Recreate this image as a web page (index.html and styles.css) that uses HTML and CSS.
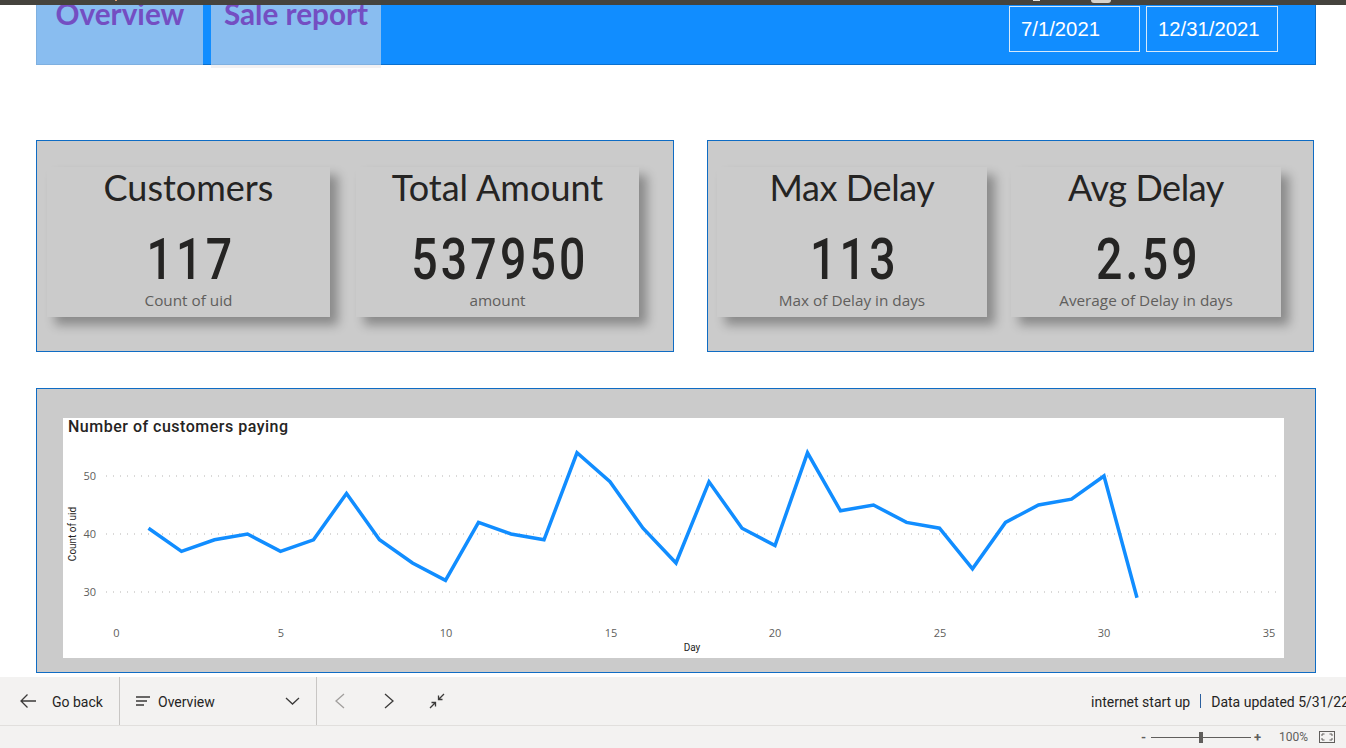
FILE: index.html
```html
<!DOCTYPE html>
<html lang="en">
<head>
    <meta charset="UTF-8">
    <meta name="viewport" content="width=device-width, initial-scale=1.0">
    <title>Overview</title>
    <link rel="stylesheet" href="styles.css">
</head>
<body>
    <div class="browser-edge">
        <span class="edge-mark mark-dot"></span>
        <span class="edge-mark mark-white"></span>
        <span class="edge-mark mark-chip"></span>
    </div>

    <main class="report">
        <header class="banner">
            <nav class="tabs">
                <a class="tab tab-overview">Overview</a>
                <a class="tab tab-sale">Sale report</a>
            </nav>
            <div class="dates">
                <div class="date date-from">7/1/2021</div>
                <div class="date date-to">12/31/2021</div>
            </div>
        </header>

        <section class="kpi-row">
            <div class="panel panel-left">
                <div class="card card-customers">
                    <div class="card-title">Customers</div>
                    <div class="card-value">117</div>
                    <div class="card-label">Count of uid</div>
                </div>
                <div class="card card-amount">
                    <div class="card-title">Total Amount</div>
                    <div class="card-value">537950</div>
                    <div class="card-label">amount</div>
                </div>
            </div>
            <div class="panel panel-right">
                <div class="card card-delay">
                    <div class="card-title">Max Delay</div>
                    <div class="card-value">113</div>
                    <div class="card-label">Max of Delay in days</div>
                </div>
                <div class="card card-delay">
                    <div class="card-title">Avg Delay</div>
                    <div class="card-value">2.59</div>
                    <div class="card-label">Average of Delay in days</div>
                </div>
            </div>
        </section>

        <section class="chart-panel">
            <div class="chart">
                <!-- viewBox keeps the page coordinates of the visual -->
                <svg class="chart-svg" viewBox="63 418 1221 240" width="1221" height="240">
                    <text class="chart-title" x="68" y="432">Number of customers paying</text>

                    <line class="grid" x1="106" y1="476" x2="1280" y2="476"/>
                    <line class="grid" x1="106" y1="534" x2="1280" y2="534"/>
                    <line class="grid" x1="106" y1="592" x2="1280" y2="592"/>

                    <text class="tick" x="96" y="480" text-anchor="end">50</text>
                    <text class="tick" x="96" y="538" text-anchor="end">40</text>
                    <text class="tick" x="96" y="596" text-anchor="end">30</text>

                    <text class="tick" x="116.500" y="637" text-anchor="middle">0</text>
                    <text class="tick" x="281" y="637" text-anchor="middle">5</text>
                    <text class="tick" x="446" y="637" text-anchor="middle">10</text>
                    <text class="tick" x="611" y="637" text-anchor="middle">15</text>
                    <text class="tick" x="775" y="637" text-anchor="middle">20</text>
                    <text class="tick" x="940" y="637" text-anchor="middle">25</text>
                    <text class="tick" x="1104" y="637" text-anchor="middle">30</text>
                    <text class="tick" x="1269" y="637" text-anchor="middle">35</text>

                    <text class="axis-name" x="692" y="651" text-anchor="middle">Day</text>
                    <text class="axis-name" transform="translate(76 534) rotate(-90)" text-anchor="middle">Count of uid</text>

                    <polyline class="line" points="148.500,528.200 181.500,551.400 214.500,539.800 247.500,534 280.500,551.400 313.500,539.800 346.500,493.400 379.500,539.800 412.500,563 445.500,580.400 478.500,522.400 511,534 544,539.800 577,452.800 610,481.800 643,528.200 676,563 709,481.800 742,528.200 775,545.600 807.500,452.800 840.500,510.800 873.500,505 906.500,522.400 939.500,528.200 972.500,568.800 1005.500,522.400 1038.500,505 1071.500,499.200 1104,476 1137,597.800"/>
                </svg>
            </div>
        </section>
    </main>

    <footer class="viewer">
        <div class="pagebar">
            <a class="bar-item go-back">
                <svg class="icon" width="16" height="14" viewBox="0 0 16 14"><path d="M16 7H1M7.500 0.500L1 7l6.500 6.500"/></svg>
                <span>Go back</span>
            </a>
            <a class="bar-item page-select">
                <svg class="icon" width="15" height="10" viewBox="0 0 15 10"><path d="M0 1h14M0 5h11M0 9h8"/></svg>
                <span class="page-name">Overview</span>
                <svg class="icon" width="15" height="8" viewBox="0 0 15 8"><path d="M1 1l6.500 6L14 1"/></svg>
            </a>
            <div class="bar-nav">
                <svg class="icon icon-off" width="10" height="16" viewBox="0 0 10 16"><path d="M9 1L1 8l8 7"/></svg>
                <svg class="icon" width="10" height="16" viewBox="0 0 10 16"><path d="M1 1l8 7-8 7"/></svg>
                <svg class="icon icon-shrink" width="16" height="16" viewBox="0 0 16 16"><path d="M15 1L9.500 6.500M9.500 2.500v4h4M1 15l5.500-5.500M2.500 9.500h4v4"/></svg>
            </div>
            <div class="bar-status">
                <span>internet start up</span>
                <span class="status-sep"></span>
                <span>Data updated 5/31/22</span>
            </div>
        </div>
        <div class="zoombar">
            <span class="zoom-sign">-</span>
            <div class="zoom-track"><span class="zoom-thumb"></span></div>
            <span class="zoom-sign">+</span>
            <span class="zoom-pct">100%</span>
            <svg class="fit-icon" width="16" height="12" viewBox="0 0 16 12">
                <rect x="0.500" y="0.500" width="15" height="11"/>
                <path d="M3 5V3h2.500M13 5V3h-2.500M3 7v2h2.500M13 7v2h-2.500"/>
            </svg>
        </div>
    </footer>
</body>
</html>
```

FILE: styles.css
```css
* {
    box-sizing: border-box;
}
html, body {
    margin: 0;
    height: 100%;
}
body {
    width: 1346px;
    height: 748px;
    overflow: hidden;
    background-color: #fff;
    font-family: "Open Sans", sans-serif;
    color: #252423;
    display: flex;
    flex-direction: column;
}
.browser-edge {
    height: 5px;
    flex: none;
    background-color: #45433d;
    display: flex;
    align-items: flex-start;
    position: relative;
    z-index: 1;
}
.edge-mark {
    display: block;
}
.mark-dot {
    width: 2px;
    height: 1px;
    margin-left: 115px;
    background-color: #e0a070;
}
.mark-white {
    width: 7px;
    height: 1px;
    margin-left: 916px;
    background-color: #e8e6e0;
}
.mark-chip {
    width: 20px;
    height: 3px;
    margin-left: 51px;
    background-color: #d8d4cc;
    border-radius: 0 0 3px 3px;
}
.report {
    flex: none;
    height: 672px;
    padding: 0 30px 0 36px;
}

/* top banner */
.banner {
    height: 60px;
    background-color: #118dff;
    border-bottom: 1px solid #0a70cf;
    border-right: 1px solid #0a70cf;
    display: flex;
    justify-content: space-between;
}
.tabs {
    display: flex;
    gap: 8px;
}
.tab {
    height: 60px;
    background-color: #89bdf0;
    box-shadow: inset 0 -1px #7fb0e0;
    color: #744ec2;
    font-family: Lato, sans-serif;
    font-weight: 700;
    font-size: 29.700px;
    line-height: 18px;
    text-align: center;
}
.tab-overview {
    width: 167px;
    border-left: 1px solid #7fb0e0;
}
.tab-sale {
    width: 170px;
    height: 63px;
    border-bottom: 3px solid #f2f1f3;
}
.dates {
    display: flex;
    gap: 6px;
    margin: 1px 37px 0 0;
}
.date {
    height: 46px;
    border: 1px solid #d5e9fb;
    color: #fff;
    font-family: "Liberation Sans", sans-serif;
    font-size: 20.300px;
    line-height: 44px;
    padding-left: 11px;
}
.date-from {
    width: 131px;
}
.date-to {
    width: 132px;
}

/* kpi panels */
.kpi-row {
    display: flex;
    gap: 33px;
    margin-top: 75px;
}
.panel {
    height: 212px;
    background-color: #cbcbcb;
    border: 1px solid #0f6cc4;
    display: flex;
    padding: 26px 0 0 10px;
}
.panel-left {
    width: 638px;
    gap: 26px;
}
.panel-right {
    width: 607px;
    gap: 24px;
    padding-left: 9px;
}
.card {
    height: 150px;
    background-color: #cbcbcb;
    box-shadow: 8px 8px 10px rgba(0, 0, 0, 0.32);
    text-align: center;
}
.card-customers, .card-amount {
    width: 283px;
}
.card-delay {
    width: 270px;
}
.card-title {
    font-family: Lato, sans-serif;
    font-size: 36px;
    line-height: 40px;
}
.card-delay .card-title {
    letter-spacing: -0.400px;
}
/* no condensed face installed, so the digits get squeezed */
.card-value {
    font-family: Roboto, sans-serif;
    font-weight: 500;
    font-size: 58px;
    line-height: 50px;
    letter-spacing: 4px;
    padding-left: 6px;
    margin-top: 27px;
    transform: scaleX(0.8);
}
.card-label {
    font-size: 15.300px;
    line-height: 20px;
    color: #605e5c;
    margin-top: 6px;
}

/* line chart */
.chart-panel {
    width: 1280px;
    height: 285px;
    margin-top: 36px;
    background-color: #cbcbcb;
    border: 1px solid #0f6cc4;
    padding: 29px 0 0 26px;
}
.chart {
    width: 1221px;
    height: 240px;
    background-color: #fff;
}
.chart-svg {
    display: block;
}
.chart-title {
    font-family: Roboto, sans-serif;
    font-weight: 500;
    font-size: 16px;
    letter-spacing: 0.500px;
    fill: #252423;
}
.grid {
    stroke: #b5b3b1;
    stroke-width: 1;
    stroke-dasharray: 1 6;
}
.tick {
    font-size: 11px;
    fill: #605e5c;
}
.axis-name {
    font-family: Roboto, sans-serif;
    font-size: 10px;
    fill: #252423;
}
.line {
    fill: none;
    stroke: #118dff;
    stroke-width: 3.500;
    stroke-linejoin: miter;
}

/* power bi viewer chrome */
.viewer {
    flex: none;
    height: 71px;
    background-color: #f3f2f1;
    font-family: Roboto, sans-serif;
    font-size: 14px;
}
.pagebar {
    height: 49px;
    border-bottom: 1px solid #e1dfdd;
    display: flex;
    align-items: center;
}
.pagebar span {
    padding-top: 2px;
}
.bar-item {
    height: 48px;
    display: flex;
    align-items: center;
    border-right: 1px solid #c8c6c4;
}
.go-back {
    width: 120px;
    padding-left: 20px;
    gap: 16px;
}
.page-select {
    width: 197px;
    padding: 0 16px 0 16px;
    gap: 7px;
}
.page-name {
    flex: 1;
}
.icon {
    flex: none;
    fill: none;
    stroke: #3b3a39;
    stroke-width: 1.300;
}
.icon-off {
    stroke: #a19f9d;
}
.bar-nav {
    display: flex;
    align-items: center;
    gap: 39px;
    padding-left: 18px;
}
.icon-shrink {
    margin-left: -4px;
}
.bar-status {
    margin-left: auto;
    display: flex;
    align-items: center;
    gap: 10px;
    white-space: nowrap;
    width: 255px;
    flex: none;
}
.status-sep {
    flex: none;
    width: 1px;
    height: 14px;
    padding: 0;
    background-color: #2b5f9e;
}
.zoombar {
    height: 22px;
    display: flex;
    align-items: center;
    color: #605e5c;
    padding-left: 1141px;
    font-size: 12px;
}
.zoom-sign {
    width: 10px;
    font-weight: 700;
    font-size: 13px;
}
.zoom-track {
    width: 100px;
    height: 1px;
    background-color: #605e5c;
    display: flex;
    justify-content: center;
    align-items: center;
    margin-right: 3px;
}
.zoom-thumb {
    width: 4px;
    height: 11px;
    background-color: #605e5c;
}
.zoom-pct {
    margin-left: 15px;
}
.fit-icon {
    margin-left: 11px;
    fill: none;
    stroke: #605e5c;
    stroke-width: 1;
}
```
